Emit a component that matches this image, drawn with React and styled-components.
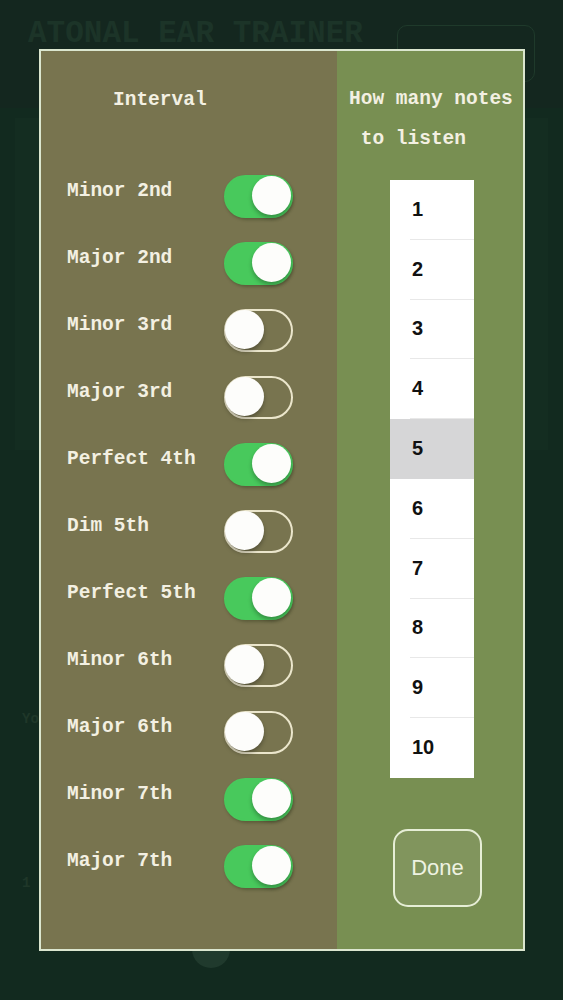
import React from 'react';
import styled, { createGlobalStyle } from 'styled-components';

const mono = `'Liberation Mono', 'Courier New', monospace`;
const sans = `'Liberation Sans', Arial, sans-serif`;

const GlobalStyle = createGlobalStyle`
    html, body {
        margin: 0;
        padding: 0;
        background: #122a1f;
    }
    * { box-sizing: border-box; }
`;

const Screen = styled.div`
    position: relative;
    width: 563px;
    height: 1000px;
    overflow: hidden;
    background: #122a1f;
    font-family: ${mono};
`;

/* faded app screen behind the settings sheet */
const TopBar = styled.header`
    height: 108px;
    background: #14271f;
    display: flex;
    align-items: flex-start;
    justify-content: space-between;
    padding: 25px 28px 0 28px;
`;

const Title = styled.h1`
    margin: -7px 0 0 0;
    font: bold 31px/1 ${mono};
    color: #1c3428;
    letter-spacing: 0;
`;

const GhostButton = styled.div`
    width: 138px;
    height: 57px;
    border: 1.5px solid #1f3a2b;
    border-radius: 10px;
`;

const Card = styled.div`
    margin: 10px 15px 0 15px;
    height: 332px;
    background: #142d21;
`;

const FadedText = styled.p`
    margin: ${p => p.$top}px 0 0 22px;
    font: bold 14px/1 ${mono};
    color: #1f3729;
`;

const SliderThumb = styled.div`
    width: 38px;
    height: 38px;
    margin: 40px 0 0 192px;
    border-radius: 50%;
    background: #203a2d;
`;

/* settings sheet */
const Sheet = styled.div`
    position: absolute;
    top: 49px;
    left: 39px;
    width: 486px;
    height: 902px;
    border: 2px solid #dbe6cf;
    display: flex;
`;

const IntervalPane = styled.section`
    width: 296px;
    background: #78744f;
    padding: 38px 0 0 26px;
`;

const PaneTitle = styled.h2`
    margin: 0;
    font: bold 19.5px/22px ${mono};
    color: #f3f0e2;
    white-space: pre;
`;

const IntervalTitle = styled(PaneTitle)`
    padding-left: 46px;
    margin-bottom: 52px;
`;

const Row = styled.div`
    height: 67px;
    display: flex;
    align-items: center;
`;

const RowLabel = styled.span`
    width: 157px;
    margin-bottom: 12px;
    font: bold 19.5px/22px ${mono};
    color: #f3f0e2;
    white-space: pre;
`;

const Switch = styled.span`
    position: relative;
    display: block;
    width: 69px;
    height: 43px;
    border-radius: 22px;
    background: ${p => (p.$on ? '#48c95c' : 'transparent')};
    border: 2px solid ${p => (p.$on ? '#48c95c' : '#ebe6cc')};
    box-shadow: ${p => (p.$on ? '1px 2px 3px rgba(40, 50, 20, 0.35)' : 'none')};
    &::after {
        content: '';
        position: absolute;
        top: -1px;
        left: ${p => (p.$on ? '26px' : '-1px')};
        width: 39px;
        height: 39px;
        border-radius: 50%;
        background: #fdfdfb;
        box-shadow: 0 3px 4px rgba(0, 0, 0, 0.28);
    }
`;

const NotesPane = styled.section`
    flex: 1;
    background: #788f52;
    padding: 28px 0 0 12px;
    display: flex;
    flex-direction: column;
`;

const NotesTitle = styled(PaneTitle)`
    line-height: 40px;
`;

const Picker = styled.ul`
    list-style: none;
    margin: 21px 0 0 41px;
    padding: 0;
    width: 84px;
    background: #ffffff;
`;

const PickerItem = styled.li`
    position: relative;
    height: 59.8px;
    display: flex;
    align-items: center;
    padding-left: 22px;
    padding-bottom: 2px;
    font: bold 20px/1 ${sans};
    color: #111;
    background: ${p => (p.$selected ? '#d6d6d7' : '#ffffff')};
    &:not(:last-child)::after {
        content: '';
        position: absolute;
        left: 20px;
        right: 0;
        bottom: 0;
        height: 1px;
        background: ${p => (p.$selected ? 'transparent' : '#e8e8e8')};
    }
`;

const DoneButton = styled.button`
    margin: 51px 0 0 44px;
    width: 89px;
    height: 78px;
    border: 2px solid #e6eed6;
    border-radius: 15px;
    background: #81955d;
    color: #eef2e2;
    font: 22px/1 ${sans};
    padding: 0;
`;

const intervals = [
    ['Minor 2nd', true],
    ['Major 2nd', true],
    ['Minor 3rd', false],
    ['Major 3rd', false],
    ['Perfect 4th', true],
    ['Dim 5th', false],
    ['Perfect 5th', true],
    ['Minor 6th', false],
    ['Major 6th', false],
    ['Minor 7th', true],
    ['Major 7th', true],
];

const counts = [1, 2, 3, 4, 5, 6, 7, 8, 9, 10];

export default function App() {
    return (
        <Screen>
            <GlobalStyle />
            <TopBar>
                <Title>ATONAL EAR TRAINER</Title>
                <GhostButton />
            </TopBar>
            <Card />
            <FadedText $top={262}>You</FadedText>
            <FadedText $top={150}>1</FadedText>
            <SliderThumb />

            <Sheet>
                <IntervalPane>
                    <IntervalTitle>Interval</IntervalTitle>
                    {intervals.map(([name, on]) => (
                        <Row key={name}>
                            <RowLabel>{name}</RowLabel>
                            <Switch $on={on} />
                        </Row>
                    ))}
                </IntervalPane>
                <NotesPane>
                    <NotesTitle>{'How many notes\n to listen'}</NotesTitle>
                    <Picker>
                        {counts.map(n => (
                            <PickerItem key={n} $selected={n === 5}>{n}</PickerItem>
                        ))}
                    </Picker>
                    <DoneButton>Done</DoneButton>
                </NotesPane>
            </Sheet>
        </Screen>
    );
}
